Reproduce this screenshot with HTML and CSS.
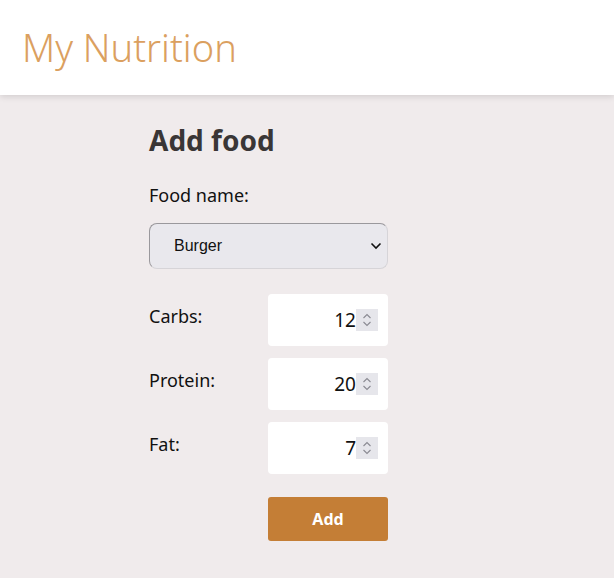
FILE: index.html
```html
<!DOCTYPE html>
<html>
<head>
<meta charset="utf-8">
<link rel="stylesheet" href="styles.css">
</head>
<body>
<header class="topbar">
  <h1 class="brand">My Nutrition</h1>
</header>
<main class="content">
  <h2 class="title">Add food</h2>
  <label class="field-label">Food name:</label>
  <div class="select">
    <span class="select-value">Burger</span>
    <svg class="chev" width="12" height="8" viewBox="0 0 12 8"><path d="M1.5 1.5 L6 6 L10.5 1.5" fill="none" stroke="#111" stroke-width="1.6"/></svg>
  </div>
  <div class="rows">
    <div class="row">
      <span class="row-label">Carbs:</span>
      <div class="num"><span class="num-value">12</span><span class="spin"><svg width="12" height="18" viewBox="0 0 12 18"><path d="M2.5 7 L6 3.5 L9.5 7 M2.5 11 L6 14.5 L9.5 11" fill="none" stroke="#8a8a92" stroke-width="1.1"/></svg></span></div>
    </div>
    <div class="row">
      <span class="row-label">Protein:</span>
      <div class="num"><span class="num-value">20</span><span class="spin"><svg width="12" height="18" viewBox="0 0 12 18"><path d="M2.5 7 L6 3.5 L9.5 7 M2.5 11 L6 14.5 L9.5 11" fill="none" stroke="#8a8a92" stroke-width="1.1"/></svg></span></div>
    </div>
    <div class="row">
      <span class="row-label">Fat:</span>
      <div class="num"><span class="num-value">7</span><span class="spin"><svg width="12" height="18" viewBox="0 0 12 18"><path d="M2.5 7 L6 3.5 L9.5 7 M2.5 11 L6 14.5 L9.5 11" fill="none" stroke="#8a8a92" stroke-width="1.1"/></svg></span></div>
    </div>
  </div>
  <div class="actions">
    <button class="add-btn">Add</button>
  </div>
</main>
</body>
</html>
```
FILE: styles.css
```css
html, body {
  margin: 0;
  padding: 0;
}
body {
  background: #f0ebec;
  font-family: "Noto Sans", "Open Sans", sans-serif;
  color: #111;
  height: 578px;
  overflow: hidden;
}
.topbar {
  background: #fff;
  height: 95px;
  box-shadow: 0 2px 6px rgba(0,0,0,0.12);
  display: flex;
  align-items: center;
  padding-left: 22px;
  position: relative;
}
.brand {
  margin: 0;
  font-weight: 300;
  font-size: 38px;
  color: #dba05f;
  letter-spacing: 0;
  line-height: 1;
  padding-bottom: 2px;
}
.content {
  margin-left: 149px;
  width: 239px;
  padding-top: 23px;
}
.title {
  margin: 0;
  font-size: 28px;
  font-weight: 700;
  color: #3a3636;
  line-height: 44px;
}
.field-label {
  display: block;
  margin-top: 20px;
  font-size: 18px;
  line-height: 26px;
}
.select {
  margin-top: 15px;
  height: 46px;
  box-sizing: border-box;
  background: #e9e8ed;
  border-radius: 8px;
  border: 1.5px solid #d6d4d8;
  border-top-color: #9a989c;
  border-left-color: #9a989c;
  display: flex;
  align-items: center;
  justify-content: space-between;
  padding: 0 5px 0 24px;
}
.select-value {
  font-family: "Liberation Sans", Arial, sans-serif;
  font-size: 16px;
}
.rows {
  margin-top: 25px;
  display: flex;
  flex-direction: column;
  gap: 12px;
}
.row {
  display: flex;
  align-items: center;
  justify-content: space-between;
  height: 52px;
}
.row-label {
  font-size: 18px;
  margin-top: -8px;
}
.num {
  width: 120px;
  height: 52px;
  box-sizing: border-box;
  background: #fff;
  border-radius: 4px;
  display: flex;
  align-items: center;
  justify-content: flex-end;
  padding-right: 10px;
}
.num-value {
  font-size: 19px;
  line-height: 1;
}
.spin {
  width: 22px;
  height: 22px;
  background: #e6e6eb;
  display: flex;
  align-items: center;
  justify-content: center;
}
.actions {
  margin-top: 23px;
  display: flex;
  justify-content: flex-end;
}
.add-btn {
  width: 120px;
  height: 44px;
  background: #c47e36;
  color: #fff;
  border: none;
  border-radius: 3px;
  font-family: "Noto Sans", sans-serif;
  font-weight: 700;
  font-size: 16px;
}
```
